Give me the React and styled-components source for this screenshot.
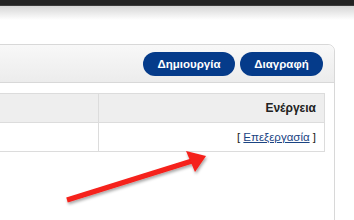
import React from "react";
import styled, { createGlobalStyle } from "styled-components";

const GlobalStyle = createGlobalStyle`
  html, body {
    margin: 0;
    padding: 0;
    background: #fff;
    font-family: "Liberation Sans", Arial, sans-serif;
  }
`;

const Page = styled.div`
  position: relative;
  width: 354px;
  height: 220px;
  overflow: hidden;
  background: #fff;
`;

const TopBar = styled.div`
  height: 5px;
  background: #222;
  border-bottom: 1px solid #3a3a3a;
`;

const TopShade = styled.div`
  height: 14px;
  background: linear-gradient(#d6d6d6, #fff);
`;

const Panel = styled.div`
  margin: 24px 0 0 -10px;
  width: 343px;
  height: 200px;
  border: 1px solid #d8d8d8;
  border-top-right-radius: 7px;
  background: #fff;
`;

const PanelHeader = styled.div`
  display: flex;
  justify-content: flex-end;
  gap: 5px;
  height: 38px;
  padding: 7px 11px 0 0;
  box-sizing: border-box;
  border-bottom: 1px solid #d8d8d8;
  border-top-right-radius: 7px;
  background: linear-gradient(#f8f8f8, #ececec);
`;

const Button = styled.button`
  width: ${(p) => p.$w}px;
  height: 24px;
  padding: 0;
  border: none;
  border-radius: 12px;
  background: #053b8a;
  color: #fff;
  font-family: "Liberation Sans", Arial, sans-serif;
  font-size: 11.5px;
  font-weight: bold;
  cursor: pointer;
`;

const PanelBody = styled.div`
  padding: 10px 9px 0 0;
`;

const Table = styled.table`
  width: 334px;
  border-collapse: collapse;
  font-size: 12px;
`;

const HeadCell = styled.th`
  height: 28px;
  padding: 0 8px;
  border: 1px solid #dcdcdc;
  background: #eeeeee;
  color: #222;
  text-align: right;
  font-weight: bold;
  width: ${(p) => p.$w || "auto"};
`;

const Cell = styled.td`
  height: 28px;
  padding: 0 8px;
  border: 1px solid #dcdcdc;
  color: #222;
  font-size: 11.5px;
  text-align: right;
`;

const Link = styled.a`
  color: #1a4483;
  text-decoration: underline;
`;

const Arrow = styled.svg`
  position: absolute;
  left: 0;
  top: 0;
  pointer-events: none;
`;

export default function App() {
  return (
    <Page>
      <GlobalStyle />
      <TopBar />
      <TopShade />
      <Panel>
        <PanelHeader>
          <Button $w={92}>Δημιουργία</Button>
          <Button $w={83}>Διαγραφή</Button>
        </PanelHeader>
        <PanelBody>
          <Table>
            <thead>
              <tr>
                <HeadCell $w="90px" />
                <HeadCell>Ενέργεια</HeadCell>
              </tr>
            </thead>
            <tbody>
              <tr>
                <Cell />
                <Cell>
                  [ <Link href="#">Επεξεργασία</Link> ]
                </Cell>
              </tr>
            </tbody>
          </Table>
        </PanelBody>
      </Panel>
      <Arrow width="354" height="220" viewBox="0 0 354 220">
        <defs>
          <filter id="sh" x="-20%" y="-20%" width="140%" height="160%">
            <feDropShadow dx="1" dy="2" stdDeviation="1.5" floodColor="#000" floodOpacity="0.35" />
          </filter>
        </defs>
        <g filter="url(#sh)">
          <line x1="67" y1="200" x2="192" y2="161" stroke="#f5201a" strokeWidth="5" />
          <polygon points="206,156 186,151 195,172" fill="#f5201a" />
        </g>
      </Arrow>
    </Page>
  );
}
